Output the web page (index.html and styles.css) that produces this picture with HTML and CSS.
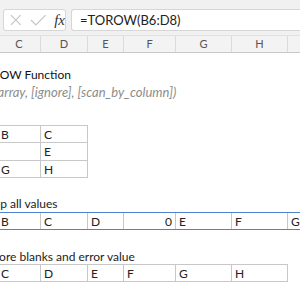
FILE: index.html
```html
<!DOCTYPE html>
<html lang="en">
<head>
    <meta charset="UTF-8">
    <title>TOROW Function</title>
    <link rel="stylesheet" href="styles.css">
</head>
<body>
    <!-- Formula bar -->
    <div class="formula-bar">
        <div class="fx-box">
            <svg class="icon" width="14" height="14" viewBox="0 0 14 14">
                <path d="M2 2 L12 12 M12 2 L2 12" stroke="#c4c4c4" stroke-width="1.2" fill="none"/>
            </svg>
            <svg class="icon" width="17" height="12" viewBox="0 0 17 12">
                <path d="M1 6 L6 11 L16 1" stroke="#c4c4c4" stroke-width="1.2" fill="none"/>
            </svg>
            <span class="fx">fx</span>
        </div>
        <div class="formula-input">=TOROW(B6:D8)</div>
    </div>

    <div class="sheet">
        <!-- Column headers -->
        <div class="cols col-heads">
            <div class="head">C</div>
            <div class="head">D</div>
            <div class="head">E</div>
            <div class="head">F</div>
            <div class="head">G</div>
            <div class="head">H</div>
            <div class="head last"></div>
        </div>

        <div class="gap-top"></div>
        <div class="line title">TOROW Function</div>
        <div class="line syntax">=TOROW(array, [ignore], [scan_by_column])</div>
        <div class="gap-table"></div>

        <!-- Source data -->
        <div class="cols data r1">
            <div class="cell box">B</div>
            <div class="cell box">C</div>
        </div>
        <div class="cols data r2">
            <div class="cell box"></div>
            <div class="cell box">E</div>
        </div>
        <div class="cols data r3">
            <div class="cell box">G</div>
            <div class="cell box">H</div>
        </div>

        <div class="gap-row"></div>
        <div class="line label">Keep all values</div>

        <!-- Spilled result, all values -->
        <div class="cols spill">
            <div class="cell sep">B</div>
            <div class="cell sep">C</div>
            <div class="cell sep">D</div>
            <div class="cell sep num">0</div>
            <div class="cell sep">E</div>
            <div class="cell sep">F</div>
            <div class="cell">G</div>
        </div>

        <div class="gap-row2"></div>
        <div class="line label label2">Ignore blanks and error value</div>

        <!-- Spilled result, ignoring blanks -->
        <div class="cols data r4">
            <div class="cell box">C</div>
            <div class="cell box">D</div>
            <div class="cell box">E</div>
            <div class="cell box">F</div>
            <div class="cell box">G</div>
            <div class="cell box">H</div>
        </div>
    </div>
</body>
</html>
```

FILE: styles.css
```css
body {
    margin: 0;
    width: 300px;
    height: 300px;
    overflow: hidden;
    background: #fff;
    font-family: 'Lato', sans-serif;
    color: #222;
}

/* Formula bar */
.formula-bar {
    display: flex;
    gap: 5px;
    height: 36px;
    padding: 9px 0 0 3px;
    box-sizing: border-box;
    background: #f1f1f1;
    border-bottom: 1px solid #e0e0e0;
}
.fx-box {
    display: flex;
    align-items: center;
    gap: 7px;
    width: 63px;
    height: 22px;
    padding-left: 5px;
    box-sizing: border-box;
    background: #fff;
    border: 1px solid #d6d6d6;
    border-radius: 3px;
}
.fx {
    font-family: 'Liberation Serif', serif;
    font-style: italic;
    font-size: 15px;
    color: #333;
    margin-left: 1px;
}
.formula-input {
    flex: 1;
    height: 22px;
    padding-left: 8px;
    box-sizing: border-box;
    background: #fff;
    border: 1px solid #d6d6d6;
    border-right: none;
    border-radius: 3px 0 0 3px;
    font-size: 13px;
    line-height: 20px;
    color: #222;
}

/* Sheet grid */
.sheet {
    margin-left: -2px;
}
.cols {
    display: grid;
    grid-template-columns: 43px 47px 36px 52px 56px 56px 60px;
}
.col-heads {
    height: 17px;
    background: #f3f3f3;
    border-bottom: 1px solid #c8c8c8;
    box-sizing: border-box;
}
.head {
    border-right: 1px solid #dcdcdc;
    text-align: center;
    font-size: 11px;
    line-height: 16px;
    color: #555;
}
.head.last {
    border-right: none;
}

.gap-top { height: 13px; }
.gap-table { height: 25px; }
.gap-row { height: 17px; }
.gap-row2 { height: 18px; }

/* Text that starts in column B, off to the left */
.line {
    font-size: 12px;
    white-space: nowrap;
    margin-left: -22px;
}
.title {
    height: 18px;
    line-height: 18px;
    color: #111;
}
.syntax {
    height: 16px;
    line-height: 16px;
    font-size: 13px;
    font-style: italic;
    color: #8c8c8c;
    margin-left: -57px;
}
.label {
    height: 17px;
    line-height: 17px;
    margin-left: -18px;
}
.label2 {
    height: 16px;
    margin-left: -15px;
}

.cell {
    font-size: 12px;
    padding: 0 3px;
    box-sizing: border-box;
    display: flex;
    align-items: center;
    white-space: nowrap;
}
.data .box {
    border-right: 1px solid #c8c8c8;
    border-bottom: 1px solid #c8c8c8;
}
.r1 .box {
    border-top: 1px solid #c8c8c8;
}
.r1 { height: 18px; }
.r2 { height: 18px; }
.r3 { height: 17px; }
.r4 { height: 18px; }
.r4 .box {
    border-top: 1px solid #c8c8c8;
}

/* Spill range with blue outline */
.spill {
    height: 18px;
    border-top: 1px solid #4f83d2;
    border-bottom: 1px solid #4f83d2;
    box-sizing: border-box;
}
.spill .sep {
    border-right: 1px solid #c8c8c8;
}
.num {
    justify-content: flex-end;
}
```
